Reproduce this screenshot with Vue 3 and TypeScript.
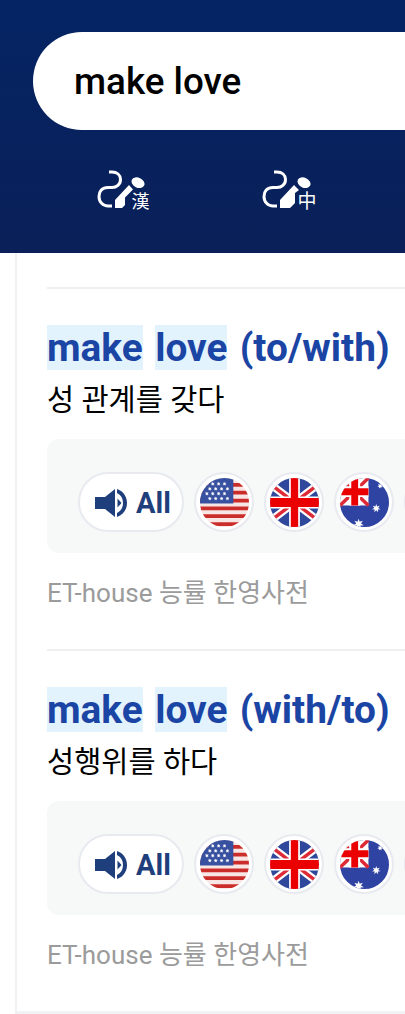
<script setup lang="ts">
interface Entry { tail: string; meaning: string }
const entries: Entry[] = [
  { tail: '(to/with)', meaning: '성 관계를 갖다' },
  { tail: '(with/to)', meaning: '성행위를 하다' },
]
const usStars: number[][] = [
  [7, 6], [13, 6], [19, 6], [25, 6],
  [10, 11], [16, 11], [22, 11], [28, 11],
  [7, 16], [13, 16], [19, 16], [25, 16],
  [10, 21], [16, 21], [22, 21], [28, 21],
]
function star(cx: number, cy: number, r: number): string {
  const pts: string[] = []
  for (let i = 0; i < 14; i++) {
    const a = (Math.PI * i) / 7 - Math.PI / 2
    const d = i % 2 === 0 ? r : r * 0.45
    pts.push(`${(cx + d * Math.cos(a)).toFixed(2)},${(cy + d * Math.sin(a)).toFixed(2)}`)
  }
  return pts.join(' ')
}
</script>

<template>
  <div class="page">
    <header class="top">
      <div class="search"><span class="query">make love</span></div>
      <div class="tools">
        <div class="tool">
          <svg class="hand" viewBox="0 0 40 40" width="40" height="40">
            <path class="cord" d="M12 2 H15 C20 2 23.500 5 23.500 9.500 C23.500 14.500 19.500 17.500 15 17.500 H11 C5 17.500 2 21.500 2 26.500 C2 32 6 36 11 36 H15" />
            <path class="fill" d="M18 38 V30 L32 15 L36 19.500 L28 27.500 V35 L25 38 Z" />
            <ellipse class="fill" cx="41" cy="12.700" rx="6.800" ry="5" transform="rotate(25 41 12.700)" />
          </svg>
          <span class="han">漢</span>
        </div>
        <div class="tool tool-second">
          <svg class="hand" viewBox="0 0 40 40" width="40" height="40">
            <path class="cord" d="M12 2 H15 C20 2 23.500 5 23.500 9.500 C23.500 14.500 19.500 17.500 15 17.500 H11 C5 17.500 2 21.500 2 26.500 C2 32 6 36 11 36 H15" />
            <path class="fill" d="M18 38 V30 L32 15 L37 20 L33 23 V33 L28 38 Z" />
            <ellipse class="fill" cx="42" cy="12.700" rx="6.800" ry="5" transform="rotate(25 42 12.700)" />
          </svg>
          <span class="han han-zh">中</span>
        </div>
      </div>
    </header>

    <main class="card">
      <section v-for="e in entries" :key="e.tail" class="entry">
        <h2 class="title"><mark>make</mark> <mark>love</mark> {{ e.tail }}</h2>
        <p class="meaning">{{ e.meaning }}</p>
        <div class="audio">
          <button class="all">
            <svg viewBox="0 0 32 30" width="32" height="30">
              <path fill="#1f3f7c" d="M0 9 H10 L20 1 V29 L10 21 H0 Z" />
              <path fill="#1f3f7c" d="M22 1 C28 3 32 8.500 32 15 C32 21.500 28 27 22 29 V25 C26 23 28 19.500 28 15 C28 10.500 26 7 22 5 Z" />
              <path fill="#1f3f7c" d="M22.500 10.500 L26.500 15 L22.500 19.500 Z" />
            </svg>
            <span>All</span>
          </button>

          <span class="flag">
            <svg viewBox="0 0 50 50" width="49" height="49">
              <rect width="50" height="50" fill="#f8e6e4" />
              <path stroke="#cb2e2a" stroke-width="3.800" d="M0 7 H50 M0 15 H50 M0 23 H50 M0 31 H50 M0 39 H50 M0 47 H50" />
              <rect width="34" height="26" fill="#37509f" />
              <g fill="#fff"><polygon v-for="(s, i) in usStars" :key="i" :points="star(s[0], s[1], 2.200)" /></g>
            </svg>
          </span>

          <span class="flag">
            <svg viewBox="0 0 50 50" width="49" height="49">
              <rect width="50" height="50" fill="#30489c" />
              <path stroke="#fff" stroke-width="8" d="M0 6 L50 44 M50 6 L0 44" />
              <path stroke="#de2a36" stroke-width="3.500" d="M0 6 L50 44 M50 6 L0 44" />
              <path stroke="#fff" stroke-width="11" d="M25 0 V50" />
              <path stroke="#fff" stroke-width="12" d="M0 25 H50" />
              <path stroke="#ea0000" stroke-width="7.500" d="M25 0 V50" />
              <path stroke="#ea0000" stroke-width="9" d="M0 25 H50" />
            </svg>
          </span>

          <span class="flag">
            <svg viewBox="0 0 50 50" width="49" height="49">
              <rect width="50" height="50" fill="#2f43a3" />
              <rect width="29" height="28" fill="#fff" />
              <path stroke="#de2a36" stroke-width="3.500" d="M0 0 L29 28 M29 0 L0 28" />
              <path stroke="#fff" stroke-width="11" d="M15 0 V28 M0 14 H29" />
              <path stroke="#ea0000" stroke-width="7" d="M15 0 V28 M0 14 H29" />
              <g fill="#fff">
                <polygon :points="star(37, 31, 4.500)" />
                <polygon :points="star(19, 47, 5.500)" />
                <polygon :points="star(41, 8, 3)" />
              </g>
            </svg>
          </span>

          <span class="flag" />
        </div>
        <p class="source">ET-house 능률 한영사전</p>
      </section>
    </main>
  </div>
</template>

<style>
html, body { margin: 0; padding: 0; background: #fff; overflow: hidden; }
</style>

<style scoped>
.page {
  width: 405px;
  height: 1014px;
  overflow: hidden;
  font-family: Roboto, "Noto Sans CJK KR", sans-serif;
}
.top {
  height: 253px;
  box-sizing: border-box;
  padding-top: 32px;
  background: linear-gradient(#042463, #0a2059);
}
.search {
  margin-left: 33px;
  width: 420px;
  height: 98px;
  box-sizing: border-box;
  padding-left: 41px;
  display: flex;
  align-items: center;
  background: #fff;
  border-radius: 49px 0 0 49px;
}
.query {
  font-size: 36.800px;
  font-weight: 500;
  color: #000;
}
.tools {
  display: flex;
  margin: 40px 0 0 97px;
}
.tool {
  position: relative;
  width: 54px;
  height: 40px;
}
.tool-second { margin-left: 111px; }
.hand { position: absolute; left: 0; top: 0; overflow: visible; }
.cord { fill: none; stroke: #fff; stroke-width: 3; }
.fill { fill: #fff; }
.han {
  position: absolute;
  left: 34.500px;
  top: 18.500px;
  font-size: 18px;
  line-height: 22px;
  color: #fff;
  font-family: "Noto Sans CJK KR", sans-serif;
}
.han-zh { left: 35.500px; font-size: 19px; }
.card {
  width: 460px;
  height: 761px;
  margin-left: 15px;
  box-sizing: border-box;
  padding: 34px 0 0 30px;
  border-left: 2px solid #f1f2f4;
  border-bottom: 3px solid #f1f2f4;
}
.entry {
  height: 362px;
  box-sizing: border-box;
  border-top: 2px solid #eeeff1;
  padding-top: 36px;
}
.title {
  margin: 0;
  font-size: 38.800px;
  line-height: 46px;
  font-weight: 700;
  word-spacing: 2.800px;
  color: #1b45a4;
  white-space: nowrap;
}
mark {
  background: #e3f3fd;
  color: inherit;
}
.meaning {
  margin: 12px 0 0;
  font-size: 29.500px;
  line-height: 34px;
  color: #000;
}
.audio {
  display: flex;
  align-items: flex-start;
  gap: 10px;
  height: 114px;
  margin-top: 22px;
  box-sizing: border-box;
  padding: 33px 0 0 31px;
  background: #f7f8f8;
  border-radius: 12px 0 0 12px;
}
.all {
  flex: none;
  display: flex;
  align-items: center;
  gap: 9px;
  width: 106px;
  height: 60px;
  box-sizing: border-box;
  padding: 1px 0 0 15px;
  background: #fff;
  border: 2px solid #e8eaef;
  border-radius: 30px;
  font: 700 29px Roboto, sans-serif;
  color: #1f3f7c;
}
.flag {
  flex: none;
  display: flex;
  align-items: center;
  justify-content: center;
  width: 60px;
  height: 60px;
  box-sizing: border-box;
  background: #fff;
  border: 2px solid #e8eaef;
  border-radius: 50%;
}
.flag svg { border-radius: 50%; }
.source {
  margin: 25px 0 0;
  font-size: 26px;
  line-height: 30px;
  color: #9b9b9b;
}
</style>
